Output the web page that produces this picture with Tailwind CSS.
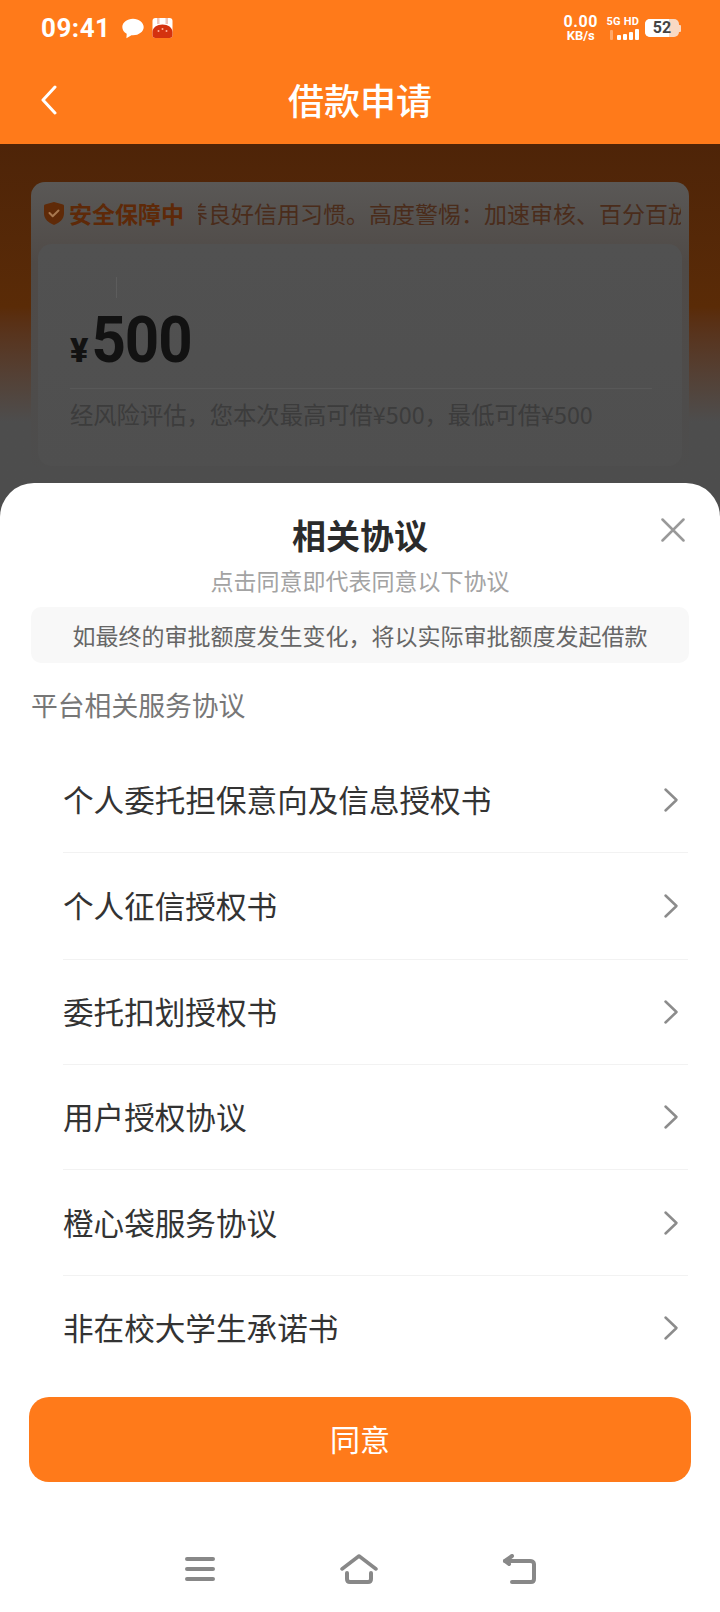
<!DOCTYPE html>
<html lang="zh-CN">
<head>
  <meta charset="UTF-8">
  <meta name="viewport" content="width=device-width, initial-scale=1.0">
  <title>借款申请</title>
  <script src="https://cdn.jsdelivr.net/npm/@tailwindcss/browser@4"></script>
</head>
<body class="bg-white font-['Noto_Sans_CJK_SC','Noto_Sans',sans-serif]">
  <div class="relative w-[720px] h-[1612px] overflow-hidden bg-[#4d4d4d]">

    <!-- status bar + title -->
    <header class="h-[144px] bg-[#ff7a1a] text-white">
      <div class="flex items-center h-[56px] pl-[41px] pr-[39px]">
        <span class="font-['Roboto'] font-bold text-[26px] leading-none tracking-[0.5px]">09:41</span>
        <svg class="ml-[11px] w-[22px] h-[21px]" viewBox="0 0 21 20"><path d="M10.5 .6C4.9 .6 .3 4.100 .3 8.600c0 2.800 1.600 5 4.200 6.400L4.200 19.400l4.800-3c.5.100 1 .1 1.500.1 5.700 0 10.200-3.500 10.200-7.900S16.200 .6 10.500 .6z" fill="#fff"/></svg>
        <svg class="ml-[8px] w-[21px] h-[22px]" viewBox="0 0 21 22">
          <rect x="0.500" y="1" width="20" height="20" rx="3" fill="#fff"/>
          <path d="M5 1h2.500v6H5zM13.500 1H16v6h-2.500z" fill="#efc4b8"/>
          <path d="M.5 15c0-4.500 4.500-7.500 10-7.500s10 3 10 7.500v3a3 3 0 0 1-3 3h-14a3 3 0 0 1-3-3z" fill="#d4320f"/>
          <circle cx="6.500" cy="14" r="1" fill="#ffb199"/><circle cx="10.500" cy="12" r="1" fill="#ffb199"/><circle cx="14.500" cy="14" r="1" fill="#ffb199"/>
        </svg>
        <div class="ml-auto flex items-center">
          <div class="flex flex-col items-center font-['Roboto'] font-bold leading-none">
            <span class="text-[16px] tracking-[0.6px]">0.00</span>
            <span class="text-[13px] -mt-[1px]">KB/s</span>
          </div>
          <div class="ml-[8px] flex flex-col items-end w-[33px]">
            <span class="font-['Roboto'] font-bold text-[11px] leading-none tracking-[0.2px] whitespace-nowrap">5G HD</span>
            <div class="flex items-end gap-[2px] mt-[2px] h-[11px]">
              <span class="w-[3px] h-[10px] bg-white/35 rounded-[1px] mr-[2px]"></span>
              <span class="w-[4px] h-[5px] bg-white rounded-[1px]"></span>
              <span class="w-[4px] h-[6px] bg-white rounded-[1px]"></span>
              <span class="w-[4px] h-[8px] bg-white rounded-[1px]"></span>
              <span class="w-[4px] h-[11px] bg-white rounded-[1px]"></span>
            </div>
          </div>
          <div class="ml-[6px] flex items-center">
            <div class="w-[34px] h-[18px] rounded-[5px] bg-[#f9d9c3] overflow-hidden relative">
              <div class="w-[24px] h-full bg-white"></div>
              <span class="absolute inset-0 flex items-center justify-center font-['Roboto'] font-bold text-[16px] leading-none text-[#444]">52</span>
            </div>
            <span class="w-[2px] h-[7px] bg-[#f9d9c3] rounded-r-[1px]"></span>
          </div>
        </div>
      </div>
      <div class="relative flex items-center justify-center h-[88px]">
        <svg class="absolute left-[40px] top-[29px] w-[18px] h-[30px]" viewBox="0 0 18 30" fill="none" stroke="#fff" stroke-width="3" stroke-linecap="round" stroke-linejoin="round"><path d="M15 2 3 15l12 13"/></svg>
        <h1 class="-mt-[2px] text-[36px] font-medium leading-none">借款申请</h1>
      </div>
    </header>

    <!-- page behind the modal (dimmed) -->
    <main class="h-[339px] pt-[38px] px-[31px] bg-gradient-to-b from-[#4e2408] via-[#5a2b07] via-[48%] to-[#4d4d4d] to-[82%]">
      <div class="h-[290px] rounded-[14px] bg-gradient-to-b from-[#5a5856] via-[#4f4a47] via-[28%] to-[#4d4d4d] px-[7px]">
        <div class="flex items-center h-[62px] pl-[6px] pr-[1px]">
          <svg class="w-[20px] h-[23px] shrink-0" viewBox="0 0 20 23">
            <path d="M10 0 1 2.500C.3 2.700 0 3.200 0 3.800v7.700c0 5 4 9 9.500 11.300.3.100.7.100 1 0C16 20.500 20 16.500 20 11.500V3.800c0-.6-.3-1.100-1-1.300z" fill="#5f2a08"/>
            <path d="m5.500 11 3.200 3.200 5.800-5.700" fill="none" stroke="#a8784f" stroke-width="2" stroke-linecap="round" stroke-linejoin="round"/>
          </svg>
          <span class="ml-[5px] shrink-0 text-[23px] font-bold leading-none text-[#5e2908]">安全保障中</span>
          <div class="ml-[14px] flex-1 min-w-0 overflow-hidden">
            <p class="-ml-[13px] whitespace-nowrap text-[23px] leading-none text-[#4a2c1b]">养良好信用习惯。高度警惕：加速审核、百分百放款</p>
          </div>
        </div>
        <div class="h-[222px] rounded-[14px] bg-gradient-to-b from-[#515151] to-[#4f4f4f] pl-[32px] pr-[30px]">
          <div class="pt-[33px] pl-[46px]"><div class="w-[1px] h-[21px] bg-[#5c5c5c]"></div></div>
          <div class="flex items-baseline h-[90px] pt-[14px] text-[#121212] font-['Roboto'] font-bold">
            <span class="text-[34px] leading-none font-black">¥</span>
            <span class="ml-[3px] text-[60px] leading-none tracking-[-1px] scale-y-[1.08] origin-[50%_80%]">500</span>
          </div>
          <div class="h-[1px] bg-[#585858]"></div>
          <p class="mt-[12px] text-[23.3px] leading-[26px] text-[#3c3c3c] whitespace-nowrap">经风险评估，您本次最高可借¥500，最低可借¥500</p>
        </div>
      </div>
    </main>

    <!-- 相关协议 sheet -->
    <section class="absolute left-0 right-0 bottom-0 h-[1129px] bg-white rounded-t-[34px] flex flex-col">
      <button class="absolute right-[35px] top-[35px] w-[24px] h-[24px]">
        <svg class="w-full h-full" viewBox="0 0 24 24" fill="none" stroke="#999" stroke-width="2.500" stroke-linecap="round"><path d="M1.500 1.500 22.500 22.500M22.500 1.500 1.500 22.500"/></svg>
      </button>
      <h2 class="mt-[29px] text-center text-[34px] font-bold leading-[46px] text-[#2b2b2b]">相关协议</h2>
      <p class="mt-[7px] text-center text-[23px] leading-[30px] text-[#a3a3a3]">点击同意即代表同意以下协议</p>
      <div class="mx-[31px] mt-[12px] h-[56px] rounded-[10px] bg-[#f8f8f8] flex items-center justify-center text-[23px] text-[#666]">如最终的审批额度发生变化，将以实际审批额度发起借款</div>
      <h3 class="ml-[31px] mt-[24px] text-[26.800px] leading-[36px] text-[#777]">平台相关服务协议</h3>

      <ul class="mt-[24px] pl-[63px] pr-[32px] text-[30.600px] text-[#333]">
        <li class="flex items-center justify-between h-[106px] border-b border-[#f2f2f2]">个人委托担保意向及信息授权书
          <svg class="w-[16px] h-[26px] mr-[9px]" viewBox="0 0 16 26" fill="none" stroke="#8c8c8c" stroke-width="2.500" stroke-linecap="round" stroke-linejoin="round"><path d="m2.500 2.500 11 10.500-11 10.500"/></svg>
        </li>
        <li class="flex items-center justify-between h-[107px] border-b border-[#f2f2f2]">个人征信授权书
          <svg class="w-[16px] h-[26px] mr-[9px]" viewBox="0 0 16 26" fill="none" stroke="#8c8c8c" stroke-width="2.500" stroke-linecap="round" stroke-linejoin="round"><path d="m2.500 2.500 11 10.500-11 10.500"/></svg>
        </li>
        <li class="flex items-center justify-between h-[105px] border-b border-[#f2f2f2]">委托扣划授权书
          <svg class="w-[16px] h-[26px] mr-[9px]" viewBox="0 0 16 26" fill="none" stroke="#8c8c8c" stroke-width="2.500" stroke-linecap="round" stroke-linejoin="round"><path d="m2.500 2.500 11 10.500-11 10.500"/></svg>
        </li>
        <li class="flex items-center justify-between h-[105px] border-b border-[#f2f2f2]">用户授权协议
          <svg class="w-[16px] h-[26px] mr-[9px]" viewBox="0 0 16 26" fill="none" stroke="#8c8c8c" stroke-width="2.500" stroke-linecap="round" stroke-linejoin="round"><path d="m2.500 2.500 11 10.500-11 10.500"/></svg>
        </li>
        <li class="flex items-center justify-between h-[106px] border-b border-[#f2f2f2]">橙心袋服务协议
          <svg class="w-[16px] h-[26px] mr-[9px]" viewBox="0 0 16 26" fill="none" stroke="#8c8c8c" stroke-width="2.500" stroke-linecap="round" stroke-linejoin="round"><path d="m2.500 2.500 11 10.500-11 10.500"/></svg>
        </li>
        <li class="flex items-center justify-between h-[104px]">非在校大学生承诺书
          <svg class="w-[16px] h-[26px] mr-[9px]" viewBox="0 0 16 26" fill="none" stroke="#8c8c8c" stroke-width="2.500" stroke-linecap="round" stroke-linejoin="round"><path d="m2.500 2.500 11 10.500-11 10.500"/></svg>
        </li>
      </ul>

      <button class="mx-[29px] mt-[17px] h-[85px] pb-[3px] rounded-[20px] bg-[#ff7a1a] text-white text-[30px]">同意</button>

      <!-- system nav -->
      <nav class="mt-[72px] flex items-center justify-between pl-[185px] pr-[184px]">
        <svg class="w-[30px] h-[28px]" viewBox="0 0 30 28" fill="none" stroke="#888" stroke-width="4" stroke-linecap="round"><path d="M2 4h26M2 14h26M2 24h26"/></svg>
        <svg class="w-[38px] h-[30px]" viewBox="0 0 38 30" fill="none" stroke="#888" stroke-width="3.500" stroke-linecap="round" stroke-linejoin="round"><path d="M2 15 19 2l17 13"/><path d="M7 19v6c0 2 1 3 3 3h18c2 0 3-1 3-3v-6" stroke-width="4"/></svg>
        <svg class="w-[34px] h-[30px]" viewBox="0 0 34 30" fill="none" stroke="#888" stroke-width="4" stroke-linecap="round" stroke-linejoin="round"><path d="M3 7h25c2 0 4 1 4 3v15c0 2-1 3-3 3H10"/><path d="M10 2 3 7l4 3"/></svg>
      </nav>
    </section>
  </div>
</body>
</html>
